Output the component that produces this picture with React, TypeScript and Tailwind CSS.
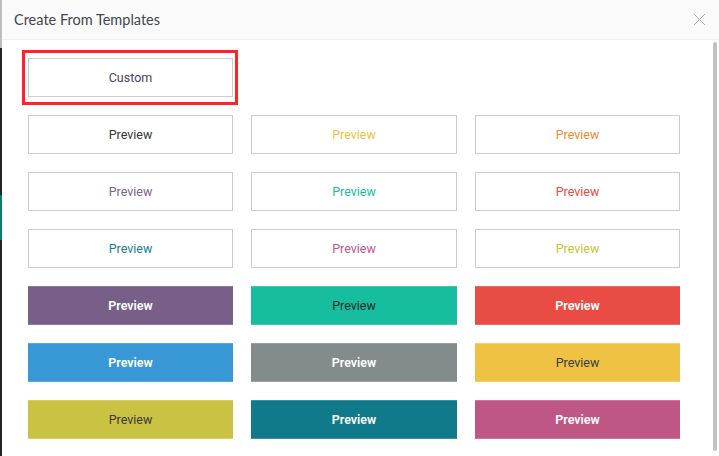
import React from 'react';

type Tpl = { bg?: string; text: string; filled?: boolean; bold?: boolean };

const templates: Tpl[] = [
  { text: 'text-[#333333]' },
  { text: 'text-[#f1bf3d]' },
  { text: 'text-[#ef8a2b]' },
  { text: 'text-[#78628a]' },
  { text: 'text-[#17be9d]' },
  { text: 'text-[#e84c3f]' },
  { text: 'text-[#157e8f]' },
  { text: 'text-[#c1548a]' },
  { text: 'text-[#c7c23c]' },
  { filled: true, bg: 'bg-[#775f88] border-[#8f7ba0]', text: 'text-white', bold: true },
  { filled: true, bg: 'bg-[#16be9f] border-[#3fcbb0]', text: 'text-[#1f2b28]' },
  { filled: true, bg: 'bg-[#e84c45] border-[#ee6c66]', text: 'text-white', bold: true },
  { filled: true, bg: 'bg-[#3897d5] border-[#5aa9de]', text: 'text-white', bold: true },
  { filled: true, bg: 'bg-[#838c8b] border-[#9aa2a1]', text: 'text-white', bold: true },
  { filled: true, bg: 'bg-[#efc244] border-[#f3d06a]', text: 'text-[#3a3a3a]' },
  { filled: true, bg: 'bg-[#c9c243] border-[#d6d068]', text: 'text-[#3a3a3a]' },
  { filled: true, bg: 'bg-[#107a8b] border-[#3a93a1]', text: 'text-white', bold: true },
  { filled: true, bg: 'bg-[#be5785] border-[#cc779c]', text: 'text-white', bold: true },
];

const App: React.FC = () => {
  return (
    <div
      className="w-[719px] h-[456px] flex overflow-hidden bg-white"
      style={{ fontFamily: 'Lato, "Open Sans", "Liberation Sans", sans-serif' }}
    >
      {/* backdrop peeking at the left */}
      <div className="w-[2px] flex flex-col shrink-0 bg-[#222326]">
        <div className="h-[48px] bg-[#bdbdbd]" />
        <div className="h-[147px]" />
        <div className="h-[45px] bg-[#0d7b6c]" />
      </div>

      <div className="flex-1 flex flex-col">
        <div className="h-[40px] shrink-0 bg-[#fafafa] border-b border-[#f0f0f0] flex items-center justify-between pl-[12px] pr-[13px]">
          <span className="text-[14.5px] text-[#454552]">Create From Templates</span>
          <svg width="13" height="13" viewBox="0 0 13 13" className="text-[#aaaaaa]">
            <path d="M1 1 L12 12 M12 1 L1 12" stroke="currentColor" strokeWidth="1" fill="none" />
          </svg>
        </div>

        <div className="relative flex-1 pl-[26px] pt-[18px] font-['Roboto',sans-serif]">
          <div className="absolute left-[20px] top-[10px] w-[216px] h-[55px] border-[3px] border-[#ff2323]" />
          <div className="w-[205px] h-[39px] pt-[2px] border border-[#cccccc] flex items-center justify-center text-[12.5px] text-[#4a4060]">
            Custom
          </div>

          <div className="grid grid-cols-[205px_206px_205px] gap-x-[18px] gap-y-[18px] mt-[18px]">
            {templates.map((t, i) => (
              <div
                key={i}
                className={`h-[39px] pt-[2px] flex items-center justify-center text-[12.5px] ${
                  t.filled ? `${t.bg} border-y` : 'border border-[#cccccc] bg-white'
                } ${t.text} ${t.bold ? 'font-semibold' : ''}`}
              >
                Preview
              </div>
            ))}
          </div>

          <div className="absolute right-[2px] top-[2px] w-[4px] h-[409px] rounded-full bg-[#c1c1c1]" />
        </div>
      </div>
    </div>
  );
};

export default App;
